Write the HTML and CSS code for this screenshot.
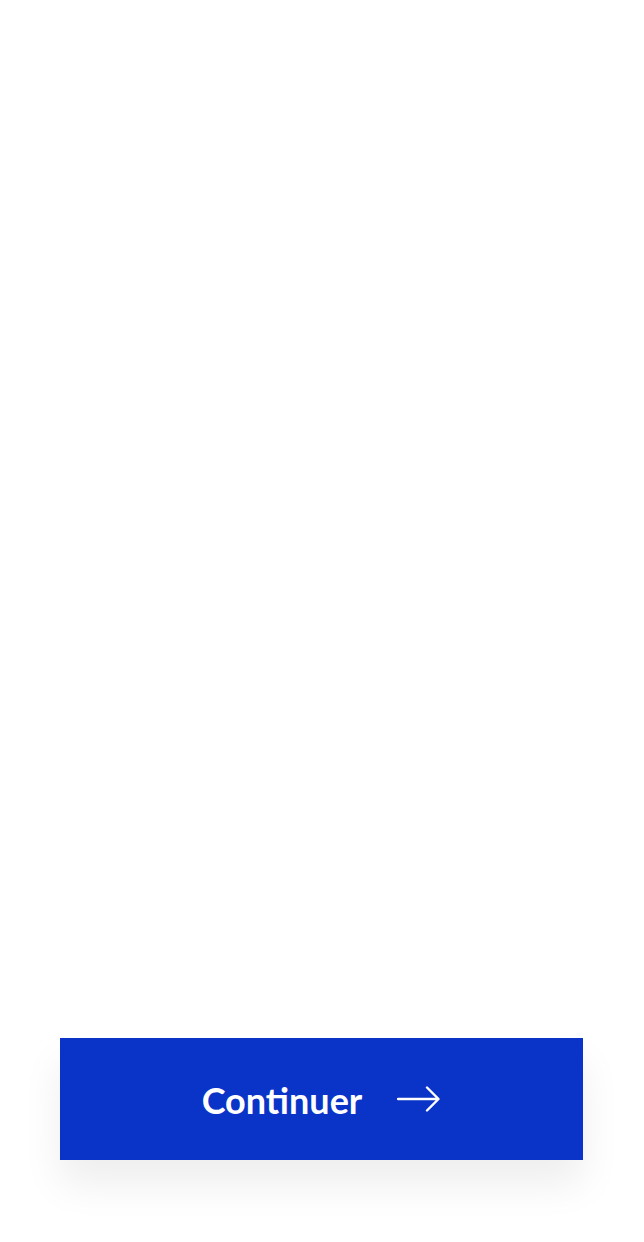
FILE: index.html
```html
<!DOCTYPE html>
<html lang="fr">
<head>
<meta charset="utf-8">
<title>Continuer</title>
<link rel="stylesheet" href="styles.css">
</head>
<body>
<main class="page">
  <div class="spacer"></div>
  <div class="actions">
    <button class="cta" type="button">
      <span class="cta-label">Continuer</span>
      <svg class="cta-arrow" width="44" height="28" viewBox="0 0 44 28" aria-hidden="true">
        <path d="M1 14 H41 M30 2.5 L41.5 14 L30 25.5" fill="none" stroke="#ffffff" stroke-width="2.4" stroke-linecap="round" stroke-linejoin="round"/>
      </svg>
    </button>
  </div>
</main>
</body>
</html>
```
FILE: styles.css
```css
html, body {
  margin: 0;
  padding: 0;
  background: #ffffff;
}
.page {
  height: 1242px;
  display: flex;
  flex-direction: column;
  font-family: "Lato", "Open Sans", sans-serif;
}
.spacer {
  flex: 1;
}
.actions {
  padding: 0 61px 82px 60px;
}
.cta {
  width: 100%;
  height: 122px;
  border: 0;
  border-radius: 0;
  background: #0a33c8;
  color: #ffffff;
  display: flex;
  align-items: center;
  justify-content: center;
  gap: 35px;
  font-family: "Lato", "Open Sans", sans-serif;
  font-weight: 700;
  font-size: 36px;
  box-shadow: 0 24px 40px rgba(0, 0, 0, 0.07);
  cursor: pointer;
  padding: 0;
}
.cta-label {
  line-height: 1;
  letter-spacing: 0;
  padding-top: 2px;
}
.cta-arrow {
  display: block;
}
```
